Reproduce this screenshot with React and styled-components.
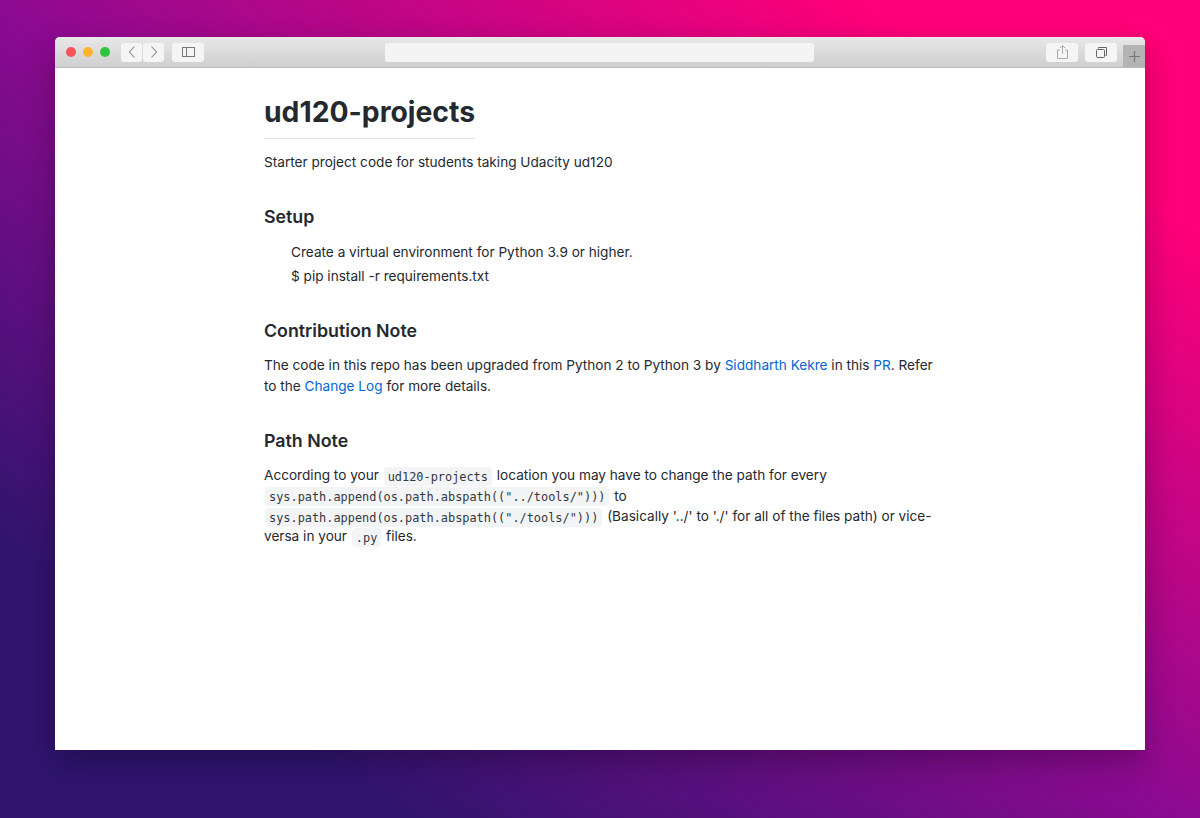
import React from "react";
import styled, { createGlobalStyle } from "styled-components";

const Global = createGlobalStyle`
  html, body { margin: 0; padding: 0; }
  body { font-family: Inter, "Liberation Sans", sans-serif; }
`;

const Page = styled.div`
  width: 1200px;
  height: 818px;
  box-sizing: border-box;
  padding: 37px 55px 68px;
  overflow: hidden;
  background: linear-gradient(to top right, #30146f 0%, #30146f 17%, #8d0a90 50%, #ff0078 86%, #ff0078 100%);
`;

const Window = styled.div`
  height: 713px;
  display: flex;
  flex-direction: column;
  background: #fff;
  border-radius: 5px 5px 0 0;
  box-shadow: 0 12px 30px rgba(0, 0, 0, 0.28);
`;

const TitleBar = styled.div`
  height: 31px;
  flex: none;
  display: flex;
  align-items: center;
  padding-left: 11px;
  border-radius: 5px 5px 0 0;
  background: linear-gradient(#e8e8e8, #cfcfcf);
  border-bottom: 1px solid #b9b9b9;
  box-sizing: border-box;
  position: relative;
`;

const Light = styled.span`
  width: 10px;
  height: 10px;
  border-radius: 50%;
  margin-right: 7px;
  background: ${(p) => p.$color};
`;

const Group = styled.div`
  display: flex;
  gap: 1px;
  margin-left: ${(p) => p.$ml}px;
`;

const ToolButton = styled.div`
  width: ${(p) => p.$w}px;
  height: 19px;
  display: flex;
  align-items: center;
  justify-content: center;
  background: #f5f5f5;
  border-radius: 3px;
  color: #8a8a8a;
`;

const Address = styled.div`
  width: 429px;
  height: 19px;
  background: #f4f4f4;
  border-radius: 3px;
  margin-left: 181px;
`;

const NewTab = styled.div`
  position: absolute;
  right: 0;
  bottom: 0;
  width: 22px;
  height: 22px;
  display: flex;
  align-items: center;
  justify-content: center;
  background: #b4b4b4;
  color: #777;
`;

const Article = styled.div`
  box-sizing: border-box;
  width: 880px;
  padding: 27px 0 0 209px;
  color: #24292e;
  font-size: 13.62px;
  line-height: 20.4px;
`;

const Title = styled.h1`
  display: inline-block;
  margin: 0 0 13px;
  padding-bottom: 9px;
  font-size: 28.3px;
  line-height: 34px;
  font-weight: 700;
  border-bottom: 1px solid #e4e6e8;
`;

const Heading = styled.h2`
  margin: ${(p) => p.$mt}px 0 ${(p) => p.$mb}px;
  font-size: 17.8px;
  line-height: 22px;
  font-weight: 600;
`;

const Para = styled.p`
  margin: 0;
`;

const Indented = styled.div`
  margin-left: 27px;
  line-height: 24px;
`;

const Link = styled.a`
  color: #0366d6;
  text-decoration: none;
`;

const Code = styled.code`
  font-family: "DejaVu Sans Mono", "Liberation Mono", monospace;
  font-size: 11.9px;
  line-height: 0;
  color: #33383d;
  background: #f3f4f5;
  border-radius: 4px;
  padding: 2.5px 4px;
  margin: 0 1px;
`;

const Chevron = ({ d }) => (
  <svg width="10" height="14" viewBox="0 0 10 14" fill="none" stroke="currentColor" strokeWidth="1.1">
    <path d={d} />
  </svg>
);

export default function App() {
  return (
    <Page>
      <Global />
      <Window>
        <TitleBar>
          <Light $color="#f8555a" />
          <Light $color="#fdb52f" />
          <Light $color="#2fc43f" />
          <Group $ml={4}>
            <ToolButton $w={21}><Chevron d="M7.5 1.5 2.5 7l5 5.5" /></ToolButton>
            <ToolButton $w={21}><Chevron d="M2.5 1.5 7.5 7l-5 5.5" /></ToolButton>
          </Group>
          <Group $ml={8}>
            <ToolButton $w={32}>
              <svg width="13" height="10" viewBox="0 0 13 10" fill="none" stroke="#777">
                <rect x="0.5" y="0.5" width="12" height="9" />
                <path d="M4.5 0.5v9" />
              </svg>
            </ToolButton>
          </Group>
          <Address />
          <Group $ml={232}>
            <ToolButton $w={32}>
              <svg width="11" height="14" viewBox="0 0 11 14" fill="none" stroke="#a8a8a8">
                <path d="M3 5H.5v8.5h10V5H8M5.5 9V1M3 3l2.5-2.5L8 3" />
              </svg>
            </ToolButton>
          </Group>
          <Group $ml={7}>
            <ToolButton $w={32}>
              <svg width="11" height="11" viewBox="0 0 11 11" fill="none" stroke="#666">
                <rect x="0.5" y="2.5" width="8" height="8" rx="1" />
                <path d="M2.5 1.5V.5h8v8H9.5" />
              </svg>
            </ToolButton>
          </Group>
          <NewTab>
            <svg width="11" height="11" viewBox="0 0 11 11" stroke="currentColor" strokeWidth="1.2">
              <path d="M5.5 0v11M0 5.5h11" />
            </svg>
          </NewTab>
        </TitleBar>
        <Article>
          <Title>ud120-projects</Title>
          <Para>Starter project code for students taking Udacity ud120</Para>
          <Heading $mt={34} $mb={12}>Setup</Heading>
          <Indented>
            Create a virtual environment for Python 3.9 or higher.
            <br />
            $ pip install -r requirements.txt
          </Indented>
          <Heading $mt={32} $mb={13}>Contribution Note</Heading>
          <Para>
            The code in this repo has been upgraded from Python 2 to Python 3 by <Link>Siddharth Kekre</Link> in this <Link>PR</Link>. Refer to the <Link>Change Log</Link> for more details.
          </Para>
          <Heading $mt={34} $mb={13}>Path Note</Heading>
          <Para>
            According to your <Code>ud120-projects</Code> location you may have to change the path for every <Code>sys.path.append(os.path.abspath(("../tools/")))</Code> to <Code>sys.path.append(os.path.abspath(("./tools/")))</Code> (Basically '../' to './' for all of the files path) or vice-versa in your <Code>.py</Code> files.
          </Para>
        </Article>
      </Window>
    </Page>
  );
}
